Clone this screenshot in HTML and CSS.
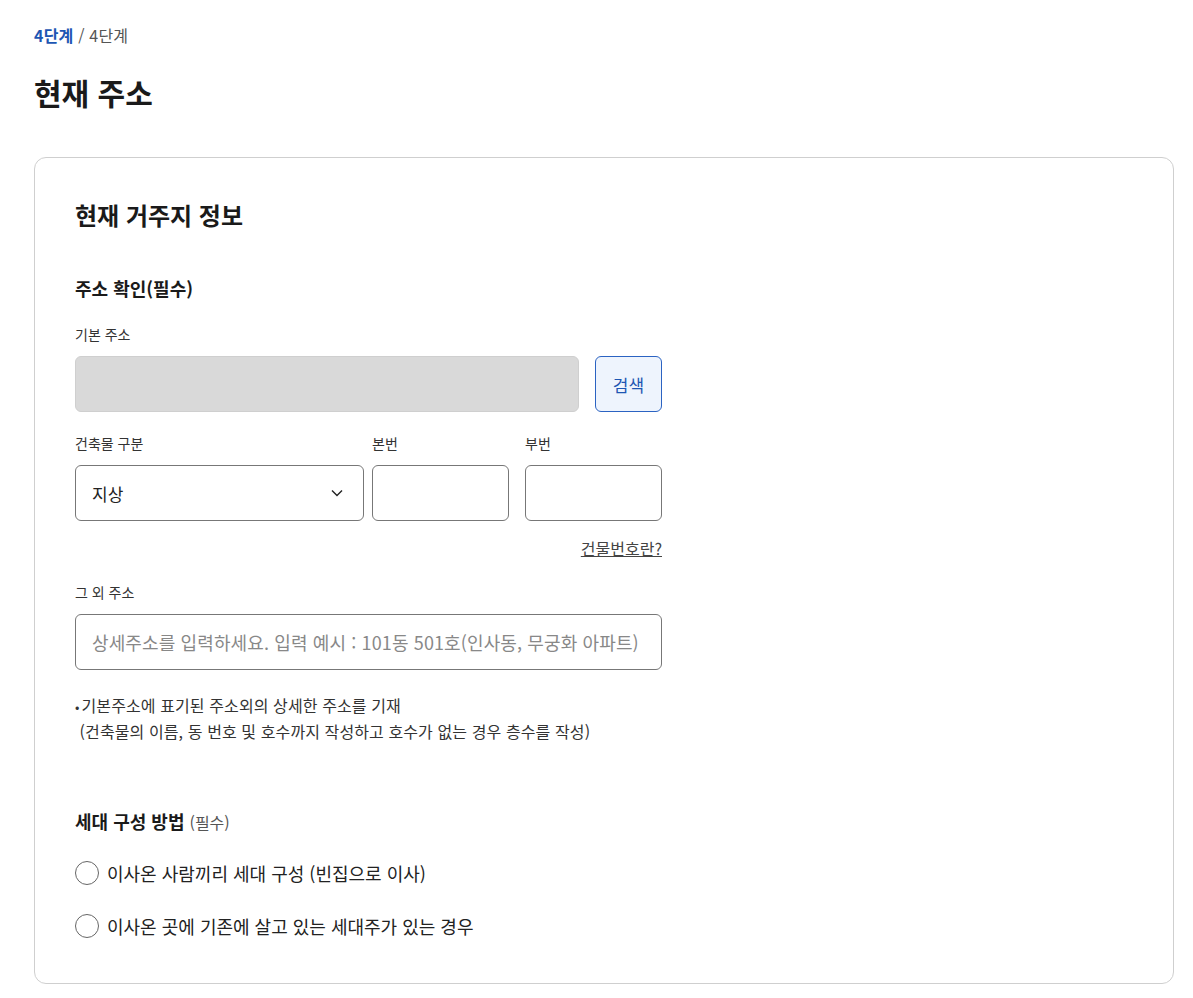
FILE: index.html
```html
<!DOCTYPE html>
<html lang="ko">
<head>
<meta charset="utf-8">
<link rel="stylesheet" href="styles.css">
</head>
<body>
<div class="page">
  <div class="breadcrumb"><span class="cur">4단계</span> <span class="sep">/</span> 4단계</div>
  <h1 class="title">현재 주소</h1>
  <section class="card">
    <h2 class="card-title">현재 거주지 정보</h2>
    <h3 class="section-title first">주소 확인(필수)</h3>
    <div class="form">
      <label class="label">기본 주소</label>
      <div class="row-search">
        <div class="input disabled"></div>
        <button class="btn-search">검색</button>
      </div>
      <div class="row-building">
        <div class="field f-type">
          <label class="label">건축물 구분</label>
          <div class="input select"><span>지상</span>
            <svg width="14" height="14" viewBox="0 0 14 14"><path d="M2 4.5 L7 9.5 L12 4.5" fill="none" stroke="#222" stroke-width="1.4"/></svg>
          </div>
        </div>
        <div class="field f-main">
          <label class="label">본번</label>
          <div class="input"></div>
        </div>
        <div class="field f-sub">
          <label class="label">부번</label>
          <div class="input"></div>
        </div>
      </div>
      <div class="help-link"><a href="#">건물번호란?</a></div>
      <label class="label">그 외 주소</label>
      <div class="input placeholder">상세주소를 입력하세요. 입력 예시 : 101동 501호(인사동, 무궁화 아파트)</div>
      <ul class="notes">
        <li><span class="dot">•</span>기본주소에 표기된 주소외의 상세한 주소를 기재<br>&nbsp;(건축물의 이름, 동 번호 및 호수까지 작성하고 호수가 없는 경우 층수를 작성)</li>
      </ul>
    </div>
    <h3 class="section-title hh">세대 구성 방법 <span class="req">(필수)</span></h3>
    <div class="radios">
      <label class="radio"><span class="circle"></span>이사온 사람끼리 세대 구성 (빈집으로 이사)</label>
      <label class="radio"><span class="circle"></span>이사온 곳에 기존에 살고 있는 세대주가 있는 경우</label>
    </div>
  </section>
</div>
</body>
</html>
```
FILE: styles.css
```css
* { box-sizing: border-box; }
html, body { margin: 0; padding: 0; background: #fff; }
body { font-family: "Noto Sans CJK KR", "Noto Sans", sans-serif; color: #1a1a1a; }
.page { padding: 24px 20px 0 34px; }
.breadcrumb { font-size: 16px; line-height: 22px; color: #555; letter-spacing: 0.2px; }
.breadcrumb .cur { color: #1d56b3; font-weight: 700; }
.breadcrumb .sep { color: #555; }
.title { margin: 26px 0 0; font-size: 30px; line-height: 40px; font-weight: 700; color: #1a1a1a; }
.card { margin-top: 45px; border: 1px solid #cfcfcf; border-radius: 12px; padding: 38px 40px 45px; width: 1140px; }
.card-title { margin: 0; font-size: 24px; line-height: 38px; font-weight: 700; }
.section-title { margin: 0; font-size: 18px; line-height: 26px; font-weight: 700; }
.section-title.first { margin-top: 41px; }
.section-title .req { font-size: 15px; font-weight: 400; color: #555; }
.form { width: 587px; margin-top: 23px; }
.label { display: block; font-size: 14px; line-height: 20px; color: #333; }
.row-search { display: flex; gap: 16px; margin-top: 12px; }
.input { height: 56px; border: 1px solid #777; border-radius: 6px; background: #fff; }
.input.disabled { flex: 1; background: #d9d9d9; border-color: #cfcfcf; }
.btn-search { width: 67px; height: 56px; border: 1px solid #2b63c2; border-radius: 6px; background: #eef4fd; color: #1d56b3; font-family: inherit; font-size: 17px; padding: 0; }
.row-building { display: flex; margin-top: 21px; }
.field .label { margin-bottom: 12px; }
.f-type { width: 289px; margin-right: 8px; }
.f-main { width: 137px; margin-right: 16px; }
.f-sub { width: 137px; }
.select { display: flex; align-items: center; justify-content: space-between; padding: 0 19px 0 16px; font-size: 17px; color: #222; }
.select svg { display: block; }
.help-link { text-align: right; margin-top: 15px; line-height: 24px; }
.help-link a { font-size: 16px; color: #444; text-decoration: underline; }
.help-link + .label { margin-top: 22px; }
.placeholder { margin-top: 12px; display: flex; align-items: center; padding: 0 16px; font-size: 18px; color: #888; white-space: nowrap; letter-spacing: 0.12px; }
.notes { list-style: none; margin: 23px 0 0; padding: 0; font-size: 16px; line-height: 25px; color: #333; letter-spacing: 0.1px; }
.notes .dot { font-size: 13px; margin-right: 2px; }
.hh { margin-top: 64px; }
.hh .req { font-size: 16px; }
.radios { margin-top: 26px; display: flex; flex-direction: column; gap: 29px; }
.radio { display: flex; align-items: center; font-size: 18px; line-height: 24px; color: #222; }
.circle { width: 24px; height: 24px; border: 1px solid #666; border-radius: 50%; margin-right: 8px; flex: none; }
```
